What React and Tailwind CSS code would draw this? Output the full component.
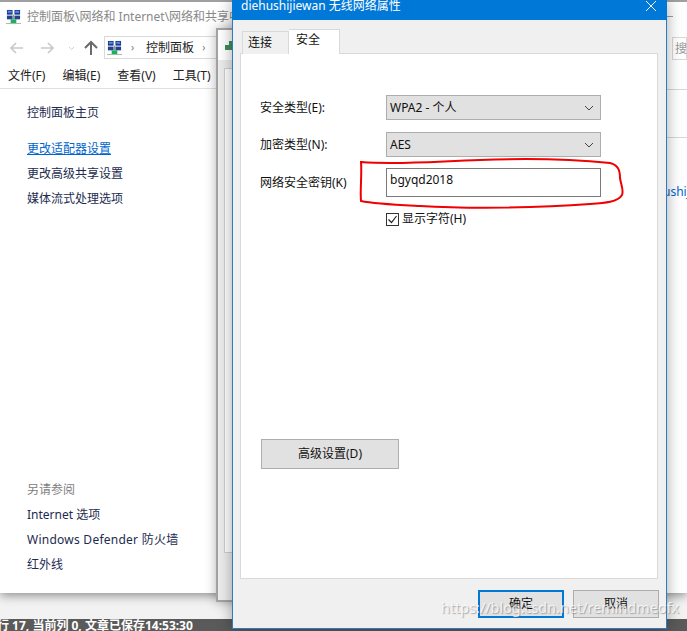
const FONT = "font-['Noto_Sans','Noto_Sans_CJK_SC',sans-serif]"

function NetIcon({ className }) {
  return (
    <svg viewBox="0 0 16 17" className={`shrink-0 ${className}`}>
      <rect x="1" y="1" width="6" height="5" fill="#1c3f94" />
      <rect x="9" y="1" width="6" height="5" fill="#1c3f94" />
      <rect x="2" y="2" width="4" height="2" fill="#5b8be0" />
      <rect x="10" y="2" width="4" height="2" fill="#5b8be0" />
      <rect x="1" y="7" width="6" height="4" fill="#26408c" />
      <rect x="9" y="7" width="6" height="4" fill="#26408c" />
      <path d="M8 6v5" stroke="#8a8a8a" strokeWidth="1" />
      <rect x="5" y="11" width="6" height="4" fill="#16b45a" />
      <rect x="0" y="15" width="16" height="1" fill="#a8b0a8" />
    </svg>
  )
}

function Chevron() {
  return (
    <svg viewBox="0 0 10 6" className="w-[10px] h-[6px]">
      <path d="M1 1l4 4 4-4" fill="none" stroke="#444" strokeWidth="1" />
    </svg>
  )
}

function Select({ value }) {
  return (
    <div className="flex items-center justify-between w-[215px] h-[25px] pl-[3px] pr-[3px] bg-[#e1e1e1] border border-[#adadad] text-[12px] text-[#111]">
      <span>{value}</span>
      <span className="w-[16px] flex justify-center"><Chevron /></span>
    </div>
  )
}

function Row({ label, children, className = '' }) {
  return (
    <div className={`flex items-center ${className}`}>
      <span className="w-[126px] text-[12px] text-[#111] whitespace-nowrap">{label}</span>
      {children}
    </div>
  )
}

function BackWindow() {
  return (
    <div className="absolute left-0 top-0 w-[240px] h-[593px] bg-white border-t-2 border-[#a0a0a0] shadow-[0_2px_10px_rgba(0,0,0,0.45)] flex flex-col">
      <div className="flex items-center h-[29px] pl-[6px] shrink-0 overflow-hidden">
        <NetIcon className="w-[15px] h-[16px] mr-[6px]" />
        <span className="text-[12px] text-[#888] whitespace-nowrap">控制面板\网络和 Internet\网络和共享中心</span>
      </div>
      <div className="flex items-center h-[33px] shrink-0">
        <svg viewBox="0 0 100 20" className="w-[100px] h-[20px] ml-[4px] shrink-0">
          <path d="M19 10H7M12 5l-5 5 5 5" fill="none" stroke="#c8c8c8" strokeWidth="1.6" />
          <path d="M37 10h12M44 5l5 5-5 5" fill="none" stroke="#c8c8c8" strokeWidth="1.6" />
          <path d="M65 9l2.500 2.500L70 9" fill="none" stroke="#d0d0d0" strokeWidth="1" />
          <path d="M87 17V5M81 10l6-6 6 6" fill="none" stroke="#6a6a6a" strokeWidth="2" />
        </svg>
        <div className="flex items-center h-[23px] w-[130px] border border-[#d9d9d9] pl-[2px] text-[12px] text-[#222]">
          <NetIcon className="w-[15px] h-[16px] mr-[9px]" />
          <span className="text-[#777] mr-[12px] text-[10px]">›</span>
          <span className="whitespace-nowrap mr-[8px]">控制面板</span>
          <span className="text-[#777] text-[10px]">›</span>
        </div>
      </div>
      <div className="flex items-center h-[25px] pl-[8px] gap-[17px] border-b border-[#e0e0e0] text-[12px] text-[#222] shrink-0 whitespace-nowrap">
        <span>文件(F)</span>
        <span>编辑(E)</span>
        <span>查看(V)</span>
        <span>工具(T)</span>
      </div>
      <div className="flex flex-col flex-1 pl-[27px] text-[12px] text-[#1c2b4f] whitespace-nowrap">
        <span className="h-[17px] leading-[17px] mt-[15px]">控制面板主页</span>
        <span className="h-[17px] leading-[17px] mt-[19px] text-[#0066cc] underline">更改适配器设置</span>
        <span className="h-[17px] leading-[17px] mt-[8px]">更改高级共享设置</span>
        <span className="h-[17px] leading-[17px] mt-[8px]">媒体流式处理选项</span>
        <span className="h-[17px] leading-[17px] mt-[274px] text-[#808080]">另请参阅</span>
        <span className="h-[17px] leading-[17px] mt-[8px]">Internet 选项</span>
        <span className="h-[17px] leading-[17px] mt-[8px] tracking-[0.25px]">Windows Defender 防火墙</span>
        <span className="h-[17px] leading-[17px] mt-[8px]">红外线</span>
      </div>
    </div>
  )
}

function RightWindow() {
  return (
    <div className="absolute left-[640px] top-0 w-[47px] h-[593px] bg-white border-t-2 border-[#a0a0a0] shadow-[0_2px_10px_rgba(0,0,0,0.45)] pl-[27px] flex flex-col overflow-hidden">
      <div className="-ml-[27px] pl-[27px] h-[15px]"><div className="w-[6px] h-[15px] border-b border-[#a0a0a0]" /></div>
      <div className="mt-[20px] h-[23px] ml-[5px] border border-[#d9d9d9] pl-[2px] text-[12px] leading-[21px] text-[#999]">搜</div>
      <div className="mt-[29px] border-b border-[#d8d8d8]" />
      <div className="mt-[47px] border-b border-[#d8d8d8]" />
      <div className="mt-[45px] text-[12px] leading-[17px] text-[#0066cc] -ml-[4px] whitespace-nowrap">ushijiewan</div>
    </div>
  )
}

function MiddleWindow() {
  return (
    <div className="absolute left-[216px] top-[28px] w-[30px] h-[574px] bg-[#ececec] border-2 border-b-2 border-[#a3a3a3] border-r-0 shadow-[0_0_12px_rgba(0,0,0,0.3)] flex flex-col">
      <div className="h-[30px] bg-white pl-[7px] pt-[9px] shrink-0">
        <svg viewBox="0 0 10 12" className="w-[10px] h-[12px]">
          <rect x="0" y="6" width="4" height="5" fill="#3e8e5a" />
          <rect x="4" y="2" width="4" height="9" fill="#3e8e5a" />
        </svg>
      </div>
      <div className="mt-[8px] ml-[6px] h-[485px] bg-white border border-[#cfcfcf] border-r-0" />
    </div>
  )
}

function Dialog() {
  return (
    <div className="absolute left-[232px] top-0 w-[435px] h-[629px] bg-[#f0f0f0] border border-t-0 border-[#2b7cc4] shadow-[0_0_14px_rgba(0,0,0,0.35)] flex flex-col">
      <div className="flex items-center justify-between h-[20px] -mx-px bg-[#0078d7] pl-[9px] pr-[10px] shrink-0 overflow-hidden">
        <span className="text-[12px] text-white whitespace-nowrap -mt-[9px]">diehushijiewan 无线网络属性</span>
        <svg viewBox="0 0 12 12" className="w-[12px] h-[12px] -mt-[9px]">
          <path d="M1 1l10 10M11 1L1 11" stroke="#fff" strokeWidth="1" />
        </svg>
      </div>
      <div className="flex items-end h-[33px] pl-[9px] shrink-0 text-[12px] text-[#111] relative z-10">
        <div className="w-[47px] h-[23px] border border-b-0 border-[#d9d9d9] bg-[#f0f0f0] pl-[5px] leading-[21px] -mb-px">连接</div>
        <div className="w-[51px] h-[25px] border border-l-0 border-b-0 border-[#d9d9d9] bg-white pl-[7px] leading-[20px] -mb-px">安全</div>
      </div>
      <div className="ml-[7px] w-[418px] h-[526px] bg-white border border-[#d9d9d9] pt-[41px] pl-[19px] shrink-0">
        <Row label="安全类型(E):"><Select value="WPA2 - 个人" /></Row>
        <Row label="加密类型(N):" className="mt-[12px]"><Select value="AES" /></Row>
        <Row label="网络安全密钥(K)" className="mt-[11px]">
          <div className="w-[215px] h-[29px] border border-[#7a7a7a] pl-[3px] text-[12px] leading-[22px] text-[#111]">bgyqd2018</div>
        </Row>
        <div className="flex items-center ml-[126px] mt-[13px] text-[12px] text-[#111]">
          <span className="flex items-center justify-center w-[13px] h-[13px] border border-[#333] mr-[3px]">
            <svg viewBox="0 0 11 11" className="w-[11px] h-[11px]">
              <path d="M1.500 5.500l3 3 5-6.500" fill="none" stroke="#222" strokeWidth="1.200" />
            </svg>
          </span>
          显示字符(H)
        </div>
        <button className="block mt-[211px] ml-px w-[138px] h-[30px] bg-[#e1e1e1] border border-[#adadad] text-[12px] text-[#111]">高级设置(D)</button>
      </div>
      <div className="flex justify-end gap-[9px] mt-[11px] pr-[7px] text-[12px] text-[#111]">
        <button className="w-[86px] h-[28px] bg-[#e1e1e1] border-2 border-[#0078d7]">确定</button>
        <button className="w-[86px] h-[28px] bg-[#e1e1e1] border border-[#adadad]">取消</button>
      </div>
    </div>
  )
}

export default function App() {
  return (
    <div className={`relative w-[687px] h-[631px] overflow-hidden bg-[#f2f2f2] ${FONT}`}>
      <div className="absolute left-0 bottom-0 w-full h-[12px] bg-[#5a5a5a] overflow-hidden">
        <span className="block -ml-[3px] -mt-[1px] text-[12px] leading-[16px] font-bold text-white whitespace-nowrap">行 17, 当前列 0, 文章已保存14:53:30</span>
      </div>
      <RightWindow />
      <BackWindow />
      <MiddleWindow />
      <Dialog />
      {/* red marker scribbled round the key field */}
      <svg viewBox="0 0 687 631" className="absolute left-0 top-0 w-[687px] h-[631px] pointer-events-none">
        <path
          d="M361 162C400 165 440 161 480 160C530 158 580 160 610 163C618 165 620 170 620 178C621 185 624 190 622 195C618 202 605 203 590 204C540 208 470 209 420 206C400 205 375 204 361 201C360 190 362 175 361 162Z"
          fill="none"
          stroke="#f00000"
          strokeWidth="2"
        />
      </svg>
      <span className="absolute left-[441px] top-[598px] text-[14.4px] leading-[20px] text-white/75 [text-shadow:1px_1px_1px_rgba(110,110,110,0.55)] whitespace-nowrap">https://blog.csdn.net/remindmeofx</span>
    </div>
  )
}
